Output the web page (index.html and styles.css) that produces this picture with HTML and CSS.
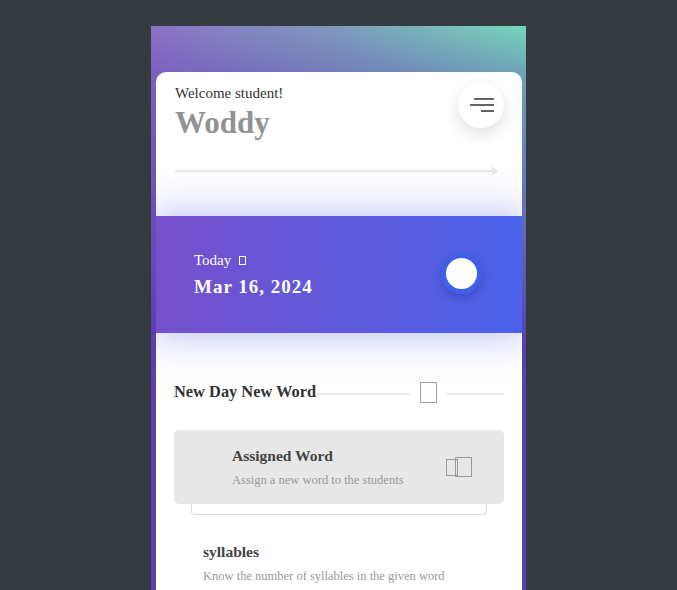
FILE: index.html
```html
<!DOCTYPE html>
<html lang="en">
<head>
  <meta charset="UTF-8" />
  <meta name="viewport" content="width=device-width, initial-scale=1.0"/>
  <title>Woddy</title>
  <link rel="stylesheet" href="styles.css">
</head>
<body>

<div class="phone">
  <div class="card">

    <div class="header">
      <div class="hello">
        <p class="welcome">Welcome student!</p>
        <h1 class="name">Woddy</h1>
      </div>
      <button class="menu-btn" type="button" aria-label="Menu">
        <svg width="26" height="16" viewBox="0 0 26 16">
          <line x1="5" y1="2" x2="25" y2="2" stroke="#666" stroke-width="2"/>
          <line x1="1" y1="8" x2="25" y2="8" stroke="#666" stroke-width="2"/>
          <line x1="12" y1="14" x2="25" y2="14" stroke="#666" stroke-width="2"/>
        </svg>
      </button>
    </div>

    <div class="arrow-line">
      <span class="arrow-bar"></span>
      <span class="arrow-head"></span>
    </div>

    <div class="today">
      <div class="today-text">
        <p class="today-label">Today <span class="tofu-sm"></span></p>
        <p class="today-date">Mar 16, 2024</p>
      </div>
      <span class="dot"></span>
    </div>

    <div class="section-title">
      <h2>New Day New Word</h2>
      <span class="rule"></span>
      <span class="tofu-lg"></span>
      <span class="rule short"></span>
    </div>

    <div class="task active">
      <div class="task-text">
        <h3>Assigned Word</h3>
        <p>Assign a new word to the students</p>
      </div>
      <span class="copy-icon">
        <span class="c1"></span>
        <span class="c2"></span>
      </span>
    </div>
    <div class="task-under"></div>

    <div class="task plain">
      <div class="task-text">
        <h3>syllables</h3>
        <p>Know the number of syllables in the given word</p>
      </div>
    </div>

  </div>
</div>

</body>
</html>
```

FILE: styles.css
```css
body {
  margin: 0;
  height: 590px;
  overflow: hidden;
  background-color: #343a3e;
  font-family: "Liberation Serif", "Times New Roman", serif;
}

p, h1, h2, h3 {
  margin: 0;
}

.phone {
  width: 375px;
  height: 564px;
  margin: 26px auto 0;
  padding-top: 46px;
  box-sizing: border-box;
  overflow: hidden;
  background:
    linear-gradient(to bottom, rgba(90, 62, 178, 0) 0px, rgba(90, 62, 178, 0.35) 50px, #5a3eb2 320px),
    linear-gradient(to right, #8c72c6 0%, #7e9cbd 50%, #76d6ba 100%);
}

.card {
  margin: 0 4px 0 5px;
  height: 100%;
  overflow: hidden;
  background: #fff;
  border-radius: 10px 10px 0 0;
}

.header {
  display: flex;
  justify-content: space-between;
  padding: 10px 18px 0 19px;
}

.welcome {
  margin-top: 3px;
  font-size: 15px;
  color: #333;
}

.name {
  margin-top: 3px;
  font-size: 31px;
  font-weight: bold;
  color: #929292;
}

.menu-btn {
  width: 46px;
  height: 46px;
  border: none;
  border-radius: 50%;
  background: #fff;
  box-shadow: 0 6px 16px rgba(0,0,0,0.12);
  display: flex;
  align-items: center;
  justify-content: center;
  padding: 0 0 0 2px;
}

.arrow-line {
  display: flex;
  align-items: center;
  margin: 25px 24px 0 19px;
}

.arrow-bar {
  flex: 1;
  height: 2px;
  background: #e8e8e8;
}

.arrow-head {
  width: 0;
  height: 0;
  border-top: 5px solid transparent;
  border-bottom: 5px solid transparent;
  border-left: 6px solid #e8e8e8;
}

.today {
  display: flex;
  align-items: center;
  justify-content: space-between;
  height: 117px;
  margin-top: 40px;
  padding: 0 40px 0 38px;
  box-sizing: border-box;
  background: linear-gradient(to right, #7650cc, #4a62ea);
  box-shadow: 0 0 36px 6px rgba(90, 100, 240, 0.35);
  color: #fff;
}

.today-label {
  font-size: 15px;
}

.tofu-sm {
  display: inline-block;
  width: 5px;
  height: 7px;
  margin-left: 4px;
  border: 1px solid #fff;
}

.today-date {
  margin-top: 7px;
  font-size: 19px;
  font-weight: bold;
  letter-spacing: 1px;
}

.dot {
  width: 31px;
  height: 31px;
  margin-top: -2px;
  border-radius: 50%;
  background: #fff;
  border: 5px solid #3f5fe6;
  box-shadow: 0 4px 10px rgba(30, 40, 140, 0.35);
}

.section-title {
  display: flex;
  align-items: center;
  margin: 48px 18px 0 18px;
}

.section-title h2 {
  font-size: 16.4px;
  color: #333;
}

.rule {
  flex: 1;
  height: 2px;
  background: #e8e8e8;
  margin-top: 3px;
}

.rule.short {
  flex: 0 0 57px;
}

.tofu-lg {
  width: 15px;
  height: 19px;
  margin: 1px 10px 0 10px;
  border: 1px solid #a0a0a0;
}

.task {
  display: flex;
  align-items: center;
  justify-content: space-between;
}

.task h3 {
  font-size: 15.5px;
  color: #444;
}

.task p {
  margin-top: 8px;
  font-size: 12.5px;
  color: #999;
}

.task.active {
  margin: 27px 18px 0 18px;
  height: 74px;
  padding: 0 32px 0 58px;
  box-sizing: border-box;
  background: #e8e8e8;
  border-radius: 5px;
}

.task-under {
  height: 10px;
  margin: 0 35px 0 35px;
  border: 1px solid #ddd;
  border-top: none;
  border-radius: 0 0 4px 4px;
}

.task.plain {
  margin-top: 28px;
  padding-left: 47px;
}

.copy-icon {
  position: relative;
  width: 26px;
  height: 20px;
}

.copy-icon .c1 {
  position: absolute;
  left: 0;
  top: 2px;
  width: 10px;
  height: 15px;
  border: 1px solid #999;
}

.copy-icon .c2 {
  position: absolute;
  left: 9px;
  top: 0;
  width: 15px;
  height: 18px;
  border: 1px solid #999;
}
```
